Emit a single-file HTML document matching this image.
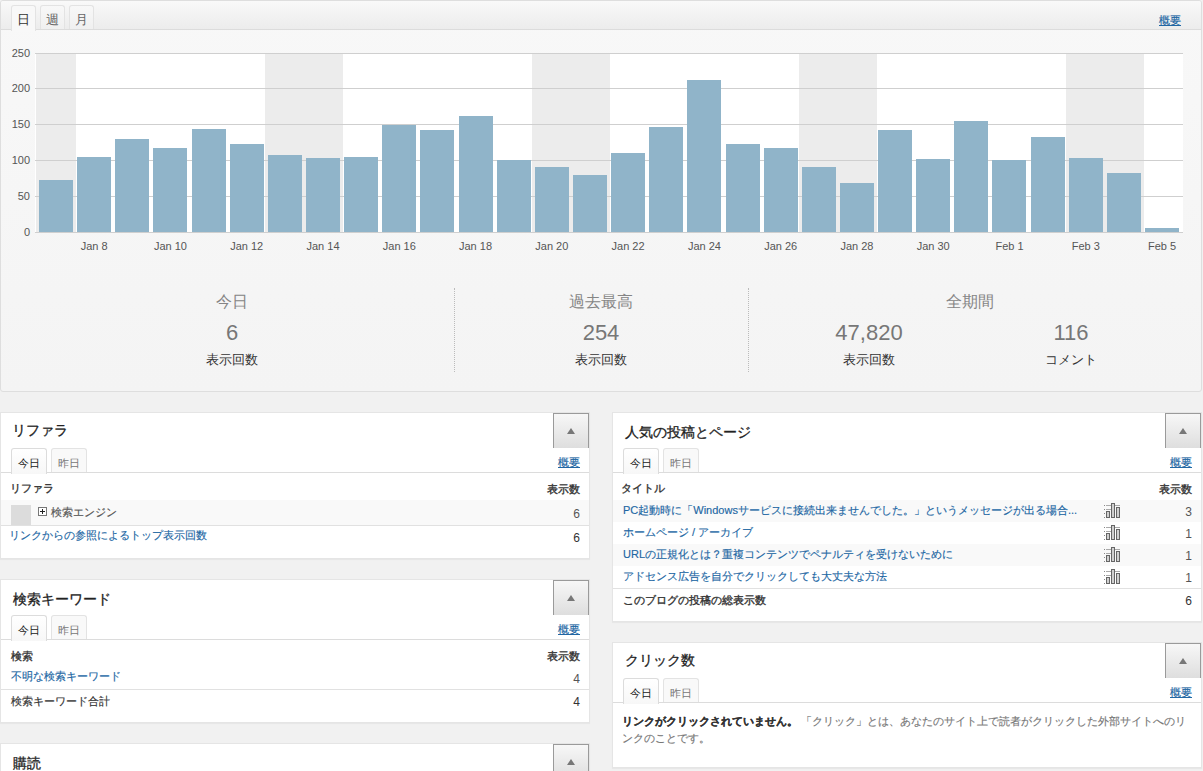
<!DOCTYPE html><html><head><meta charset="utf-8"><style>
*{box-sizing:border-box}
html,body{margin:0;padding:0}
body{width:1203px;height:771px;overflow:hidden;background:#f1f1f1;position:relative;font-family:"Liberation Sans",sans-serif;color:#333}
.abs{position:absolute}
#top{position:absolute;left:0;top:0;width:1202px;height:392px;border:1px solid #dedede;border-radius:3px;overflow:hidden;background:linear-gradient(#f8f8f8,#f4f4f4)}
#thead{position:absolute;left:0;top:0;width:1200px;height:29px;background:linear-gradient(#f9f9f9,#ececec);border-bottom:1px solid #dcdcdc}
.ttab{position:absolute;top:4px;height:24px;width:25px;border:1px solid #e3e3e3;border-bottom:none;border-radius:3px 3px 0 0;background:linear-gradient(#f8f8f8,#f0f0f0);font-size:13px;color:#666;text-align:center;line-height:14px;padding-top:7px}
.ttab.on{background:#f8f8f8;height:26px;color:#333}
.link{color:#2166a3;text-decoration:underline}
.gl{position:absolute;left:35px;width:1148px;height:1px;background:#cfcfcf}
.yl{position:absolute;left:0;width:30px;text-align:right;font-size:11px;color:#555;line-height:14px}
.xl{position:absolute;top:239px;width:60px;text-align:center;font-size:11px;color:#555;line-height:14px}
.plot{position:absolute;left:35px;top:53px;width:1148px;height:179px;background:#fff}
.band{position:absolute;top:54px;height:178px;background:#ececec}
.bar{position:absolute;width:34px;background:#90b4c9}
.st{position:absolute;text-align:center;width:200px}
.sh{font-size:16px;color:#858585;line-height:18px}
.sv{font-size:22px;color:#777;line-height:24px;margin-top:2px}
.sl{font-size:12.5px;color:#333;line-height:14px}
.sep{position:absolute;top:288px;height:84px;width:0;border-left:1px dotted #bbb}
.w{position:absolute;background:#fff;border:1px solid #e5e5e5;box-shadow:0 1px 1px rgba(0,0,0,.04)}
.wt{position:absolute;left:12px;top:10px;font-size:14px;font-weight:normal;-webkit-text-stroke:0.3px #222;color:#222;line-height:18px}
.tog{position:absolute;top:0;width:36px;height:35px;border:1px solid #9a9a9a;border-bottom:none;background:linear-gradient(#f7f7f7,#dedede)}
.tog:after{content:"";position:absolute;left:13px;top:14px;border-left:4px solid transparent;border-right:4px solid transparent;border-bottom:6px solid #777}
.tabline{position:absolute;left:0;right:0;height:1px;background:#dcdcdc}
.wtab{position:absolute;height:24px;width:36px;border:1px solid #e3e3e3;border-bottom:none;border-radius:3px 3px 0 0;background:#f9f9f9;font-size:11px;color:#777;text-align:center;line-height:14px;padding-top:7px}
.wtab.on{height:26px;color:#222;border-color:#dcdcdc;background:linear-gradient(#fff,#f7f7f7)}
.sm{position:absolute;font-size:11px;line-height:14px;-webkit-text-stroke:0.15px}
.r{text-align:right}
.n{font-size:12px;-webkit-text-stroke:0}
.b{font-weight:normal;-webkit-text-stroke:0.35px #333;color:#333}
.row{position:absolute;left:0;right:0;height:22px}
.g{background:#f9f9f9}
</style></head><body>
<div id="top"><div id="thead"></div>
<div class="ttab on" style="left:10px">日</div><div class="ttab" style="left:39px">週</div><div class="ttab" style="left:68px">月</div>
<div class="sm link" style="left:1158px;top:12px;font-size:11px">概要</div>
</div>
<div class="plot"></div>
<div class="band" style="left:36px;width:40px"></div>
<div class="band" style="left:265px;width:78px"></div>
<div class="band" style="left:532px;width:78px"></div>
<div class="band" style="left:799px;width:78px"></div>
<div class="band" style="left:1066px;width:78px"></div>
<div class="gl" style="top:53px"></div>
<div class="yl" style="top:46px">250</div>
<div class="gl" style="top:88px"></div>
<div class="yl" style="top:81px">200</div>
<div class="gl" style="top:124px"></div>
<div class="yl" style="top:117px">150</div>
<div class="gl" style="top:160px"></div>
<div class="yl" style="top:153px">100</div>
<div class="gl" style="top:196px"></div>
<div class="yl" style="top:189px">50</div>
<div class="gl" style="top:232px"></div>
<div class="yl" style="top:225px">0</div>
<div class="bar" style="left:39px;top:180px;height:52px"></div>
<div class="bar" style="left:77px;top:157px;height:75px"></div>
<div class="bar" style="left:115px;top:139px;height:93px"></div>
<div class="bar" style="left:153px;top:148px;height:84px"></div>
<div class="bar" style="left:192px;top:129px;height:103px"></div>
<div class="bar" style="left:230px;top:144px;height:88px"></div>
<div class="bar" style="left:268px;top:155px;height:77px"></div>
<div class="bar" style="left:306px;top:158px;height:74px"></div>
<div class="bar" style="left:344px;top:157px;height:75px"></div>
<div class="bar" style="left:382px;top:125px;height:107px"></div>
<div class="bar" style="left:420px;top:130px;height:102px"></div>
<div class="bar" style="left:459px;top:116px;height:116px"></div>
<div class="bar" style="left:497px;top:160px;height:72px"></div>
<div class="bar" style="left:535px;top:167px;height:65px"></div>
<div class="bar" style="left:573px;top:175px;height:57px"></div>
<div class="bar" style="left:611px;top:153px;height:79px"></div>
<div class="bar" style="left:649px;top:127px;height:105px"></div>
<div class="bar" style="left:687px;top:80px;height:152px"></div>
<div class="bar" style="left:726px;top:144px;height:88px"></div>
<div class="bar" style="left:764px;top:148px;height:84px"></div>
<div class="bar" style="left:802px;top:167px;height:65px"></div>
<div class="bar" style="left:840px;top:183px;height:49px"></div>
<div class="bar" style="left:878px;top:130px;height:102px"></div>
<div class="bar" style="left:916px;top:159px;height:73px"></div>
<div class="bar" style="left:954px;top:121px;height:111px"></div>
<div class="bar" style="left:992px;top:160px;height:72px"></div>
<div class="bar" style="left:1031px;top:137px;height:95px"></div>
<div class="bar" style="left:1069px;top:158px;height:74px"></div>
<div class="bar" style="left:1107px;top:173px;height:59px"></div>
<div class="bar" style="left:1145px;top:228px;height:4px"></div>
<div class="xl" style="left:64.1px">Jan 8</div>
<div class="xl" style="left:140.4px">Jan 10</div>
<div class="xl" style="left:216.7px">Jan 12</div>
<div class="xl" style="left:293.0px">Jan 14</div>
<div class="xl" style="left:369.3px">Jan 16</div>
<div class="xl" style="left:445.5px">Jan 18</div>
<div class="xl" style="left:521.8px">Jan 20</div>
<div class="xl" style="left:598.1px">Jan 22</div>
<div class="xl" style="left:674.4px">Jan 24</div>
<div class="xl" style="left:750.7px">Jan 26</div>
<div class="xl" style="left:826.9px">Jan 28</div>
<div class="xl" style="left:903.2px">Jan 30</div>
<div class="xl" style="left:979.5px">Feb 1</div>
<div class="xl" style="left:1055.8px">Feb 3</div>
<div class="xl" style="left:1132.1px">Feb 5</div>
<div class="st sh" style="left:132px;top:293px">今日</div>
<div class="st sv" style="left:132px;top:319px">6</div>
<div class="st sl" style="left:132px;top:353px">表示回数</div>
<div class="sep" style="left:454px"></div>
<div class="st sh" style="left:501px;top:293px">過去最高</div>
<div class="st sv" style="left:501px;top:319px">254</div>
<div class="st sl" style="left:501px;top:353px">表示回数</div>
<div class="sep" style="left:748px"></div>
<div class="st sh" style="left:870px;top:293px">全期間</div>
<div class="st sv" style="left:769px;top:319px">47,820</div>
<div class="st sl" style="left:769px;top:353px">表示回数</div>
<div class="st sv" style="left:971px;top:319px">116</div>
<div class="st sl" style="left:971px;top:353px">コメント</div>
<div class="w" style="left:0px;top:412px;width:590px;height:147px"><div class="wt" style="top:8px;left:11px">リファラ</div><div class="tog" style="left:552px"></div><div class="tabline" style="top:59px"></div><div class="wtab on" style="left:10px;top:35px">今日</div><div class="wtab" style="left:50px;top:35px">昨日</div><div class="sm link r" style="right:9px;top:42px">概要</div><div class="sm b" style="left:9px;top:68px">リファラ</div><div class="sm b r" style="right:9px;top:69px">表示数</div><div class="row g" style="top:87px;height:26px;border-bottom:1px solid #e1e1e1"></div><div class="abs" style="left:10px;top:92px;width:20px;height:20px;background:#dcdcdc"></div><div class="abs" style="left:37px;top:94px;width:9px;height:9px;border:1px solid #777;background:#fff"><div class="abs" style="left:1px;top:3px;width:5px;height:1px;background:#222"></div><div class="abs" style="left:3px;top:1px;width:1px;height:5px;background:#222"></div></div><div class="sm" style="left:50px;top:92px;color:#555">検索エンジン</div><div class="sm r n" style="right:9px;top:94px;color:#555">6</div><div class="sm link" style="left:8px;top:115px;text-decoration:none">リンクからの参照によるトップ表示回数</div><div class="sm r n" style="right:9px;top:118px">6</div></div>
<div class="w" style="left:0px;top:579px;width:590px;height:144px"><div class="wt" style="">検索キーワード</div><div class="tog" style="left:552px"></div><div class="tabline" style="top:59px"></div><div class="wtab on" style="left:10px;top:35px">今日</div><div class="wtab" style="left:50px;top:35px">昨日</div><div class="sm link r" style="right:9px;top:42px">概要</div><div class="sm b" style="left:10px;top:69px">検索</div><div class="sm b r" style="right:9px;top:69px">表示数</div><div class="sm link" style="left:10px;top:89px;text-decoration:none">不明な検索キーワード</div><div class="sm r n" style="right:9px;top:92px;color:#555">4</div><div class="tabline" style="top:109px;background:#e1e1e1"></div><div class="sm" style="left:10px;top:114px">検索キーワード合計</div><div class="sm r n" style="right:9px;top:115px">4</div></div>
<div class="w" style="left:0px;top:743px;width:590px;height:60px"><div class="wt" style="">購読</div><div class="tog" style="left:552px"></div></div>
<div class="w" style="left:612px;top:412px;width:590px;height:210px"><div class="wt" style="">人気の投稿とページ</div><div class="tog" style="left:552px"></div><div class="tabline" style="top:59px"></div><div class="wtab on" style="left:10px;top:35px">今日</div><div class="wtab" style="left:50px;top:35px">昨日</div><div class="sm link r" style="right:9px;top:42px">概要</div><div class="sm b" style="left:8px;top:68px">タイトル</div><div class="sm b r" style="right:9px;top:69px">表示数</div><div class="row g" style="top:87px"></div><div class="sm link" style="left:10px;top:90px;text-decoration:none">PC起動時に「Windowsサービスに接続出来ませんでした。」というメッセージが出る場合...</div><div class="abs" style="left:491px;top:90px"><svg class="ic" width="17" height="16" viewBox="0 0 17 16"><g fill="#888"><rect x="0" y="2" width="1" height="1"/><rect x="0" y="6" width="1" height="1"/><rect x="0" y="10" width="1" height="1"/><rect x="0" y="14" width="1" height="1"/></g><g stroke="#aaa" stroke-width="1"><line x1="2" y1="2.5" x2="16" y2="2.5"/><line x1="2" y1="6.5" x2="7" y2="6.5"/></g><g fill="#d0d0d0" stroke="#666" stroke-width="1"><rect x="2.5" y="8.5" width="3" height="6"/><rect x="7.5" y="0.5" width="3" height="14"/><rect x="12.5" y="4.5" width="3" height="10"/></g></svg></div><div class="sm r n" style="right:9px;top:92px;color:#555">3</div><div class="row" style="top:109px"></div><div class="sm link" style="left:10px;top:112px;text-decoration:none">ホームページ / アーカイブ</div><div class="abs" style="left:491px;top:112px"><svg class="ic" width="17" height="16" viewBox="0 0 17 16"><g fill="#888"><rect x="0" y="2" width="1" height="1"/><rect x="0" y="6" width="1" height="1"/><rect x="0" y="10" width="1" height="1"/><rect x="0" y="14" width="1" height="1"/></g><g stroke="#aaa" stroke-width="1"><line x1="2" y1="2.5" x2="16" y2="2.5"/><line x1="2" y1="6.5" x2="7" y2="6.5"/></g><g fill="#d0d0d0" stroke="#666" stroke-width="1"><rect x="2.5" y="8.5" width="3" height="6"/><rect x="7.5" y="0.5" width="3" height="14"/><rect x="12.5" y="4.5" width="3" height="10"/></g></svg></div><div class="sm r n" style="right:9px;top:114px;color:#555">1</div><div class="row g" style="top:131px"></div><div class="sm link" style="left:10px;top:134px;text-decoration:none">URLの正規化とは？重複コンテンツでペナルティを受けないために</div><div class="abs" style="left:491px;top:134px"><svg class="ic" width="17" height="16" viewBox="0 0 17 16"><g fill="#888"><rect x="0" y="2" width="1" height="1"/><rect x="0" y="6" width="1" height="1"/><rect x="0" y="10" width="1" height="1"/><rect x="0" y="14" width="1" height="1"/></g><g stroke="#aaa" stroke-width="1"><line x1="2" y1="2.5" x2="16" y2="2.5"/><line x1="2" y1="6.5" x2="7" y2="6.5"/></g><g fill="#d0d0d0" stroke="#666" stroke-width="1"><rect x="2.5" y="8.5" width="3" height="6"/><rect x="7.5" y="0.5" width="3" height="14"/><rect x="12.5" y="4.5" width="3" height="10"/></g></svg></div><div class="sm r n" style="right:9px;top:136px;color:#555">1</div><div class="row" style="top:153px"></div><div class="sm link" style="left:10px;top:156px;text-decoration:none">アドセンス広告を自分でクリックしても大丈夫な方法</div><div class="abs" style="left:491px;top:156px"><svg class="ic" width="17" height="16" viewBox="0 0 17 16"><g fill="#888"><rect x="0" y="2" width="1" height="1"/><rect x="0" y="6" width="1" height="1"/><rect x="0" y="10" width="1" height="1"/><rect x="0" y="14" width="1" height="1"/></g><g stroke="#aaa" stroke-width="1"><line x1="2" y1="2.5" x2="16" y2="2.5"/><line x1="2" y1="6.5" x2="7" y2="6.5"/></g><g fill="#d0d0d0" stroke="#666" stroke-width="1"><rect x="2.5" y="8.5" width="3" height="6"/><rect x="7.5" y="0.5" width="3" height="14"/><rect x="12.5" y="4.5" width="3" height="10"/></g></svg></div><div class="sm r n" style="right:9px;top:158px;color:#555">1</div><div class="tabline" style="top:175px;background:#e1e1e1"></div><div class="sm b" style="left:10px;top:180px">このブログの投稿の総表示数</div><div class="sm r n" style="right:9px;top:181px">6</div></div>
<div class="w" style="left:612px;top:642px;width:590px;height:126px"><div class="wt" style="top:8px">クリック数</div><div class="tog" style="left:552px"></div><div class="tabline" style="top:59px"></div><div class="wtab on" style="left:10px;top:35px">今日</div><div class="wtab" style="left:50px;top:35px">昨日</div><div class="sm link r" style="right:9px;top:42px">概要</div><div class="sm" style="left:9px;top:70px;width:568px;line-height:17px;color:#777"><b style="color:#333">リンクがクリックされていません。</b> 「クリック」とは、あなたのサイト上で読者がクリックした外部サイトへのリンクのことです。</div></div>
</body></html>
